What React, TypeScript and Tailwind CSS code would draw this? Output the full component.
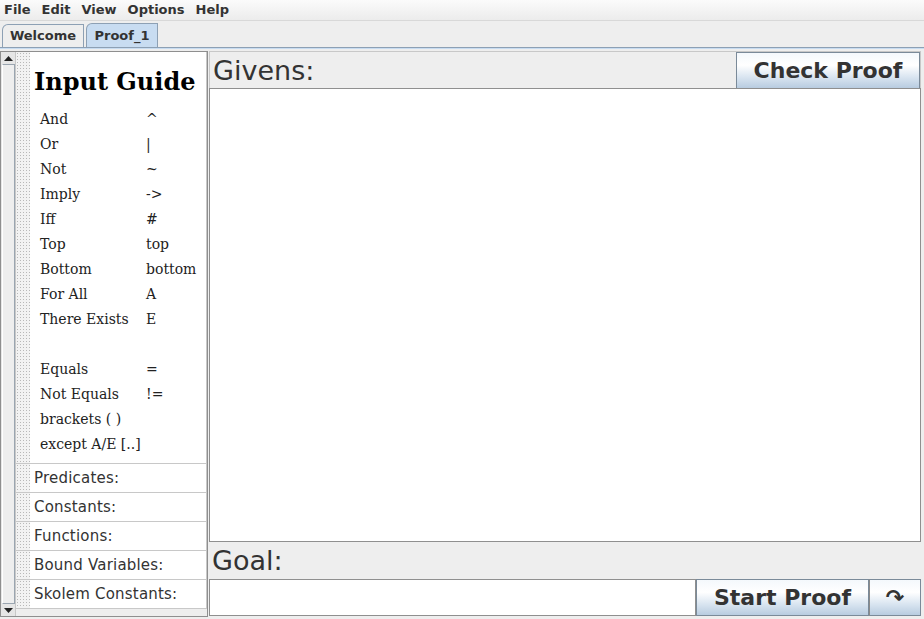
import React from "react";

const dots =
  "bg-[radial-gradient(circle,#b8b8b8_0.8px,transparent_1px)] bg-[length:3px_3px]";

const guide: [string, string][] = [
  ["And", "^"],
  ["Or", "|"],
  ["Not", "~"],
  ["Imply", "->"],
  ["Iff", "#"],
  ["Top", "top"],
  ["Bottom", "bottom"],
  ["For All", "A"],
  ["There Exists", "E"],
  ["", ""],
  ["Equals", "="],
  ["Not Equals", "!="],
  ["brackets ( )", ""],
  ["except A/E [..]", ""],
];

const sections = ["Predicates:", "Constants:", "Functions:", "Bound Variables:", "Skolem Constants:"];

const btn =
  "flex items-center justify-center border border-[#7a8a99] bg-[linear-gradient(to_bottom,#f4f8fc_0%,#ffffff_35%,#d8e4f0_70%,#b8cce0_100%)] text-[#333] font-bold text-[22px]";

export default function App() {
  return (
    <div
      className="w-[924px] h-[619px] bg-[#eeeeee] flex flex-col overflow-hidden text-[#333]"
      style={{ fontFamily: '"DejaVu Sans", sans-serif' }}
    >
      {/* menu bar */}
      <div className="h-[21px] flex items-center gap-[11px] pl-[4px] text-[13px] font-bold bg-[linear-gradient(to_bottom,#fbfbfb,#ececec)] border-b border-[#d8d8d8]">
        <span>File</span>
        <span>Edit</span>
        <span>View</span>
        <span>Options</span>
        <span>Help</span>
      </div>
      {/* tabs */}
      <div className="h-[27px] flex items-end pl-[2px] gap-[2px] border-b border-[#8da0b4]">
        <div className="h-[23px] w-[82px] flex items-center justify-center text-[13px] font-bold border border-b-0 border-[#8da0b4] rounded-tl-[6px] bg-[#eeeeee]">
          Welcome
        </div>
        <div className="h-[24px] w-[72px] flex items-center justify-center text-[13px] font-bold border border-b-0 border-[#8da0b4] rounded-tl-[6px] bg-[#c8dcf1]">
          Proof_1
        </div>
      </div>
      {/* main */}
      <div className="flex-1 flex border-t border-[#c8dcf1] pt-[2px] pr-[3px]">
        {/* left panel */}
        <div className="w-[208px] flex border border-[#8f8f8f] mb-[2px]">
          {/* scrollbar */}
          <div className="w-[15px] flex flex-col items-center bg-[#e6e6e6] border-r border-[#c8c8c8]">
            <div className="h-[12px] flex items-center justify-center">
              <svg width="9" height="5" viewBox="0 0 9 5">
                <path d="M0 5 L4.5 0 L9 5 Z" fill="#222" />
              </svg>
            </div>
            <div className="flex-1 w-[13px] border border-[#9aa5b0] bg-[#eeeeee] border-l-white" />
            <div className="h-[12px] flex items-center justify-center">
              <svg width="9" height="5" viewBox="0 0 9 5">
                <path d="M0 0 L4.5 5 L9 0 Z" fill="#222" />
              </svg>
            </div>
          </div>
          <div className="flex-1 flex flex-col">
            {/* input guide */}
            <div className="h-[412px] flex border-b border-[#c8c8c8]">
              <div className={`w-[14px] ${dots} bg-[#f2f2f2]`} />
              <div
                className="flex-1 bg-white border-r border-[#c8c8c8] pl-[4px] pt-[15px]"
                style={{ fontFamily: '"DejaVu Serif", serif' }}
              >
                <div className="text-[24px] font-bold text-black leading-[30px]">Input Guide</div>
                <div className="mt-[10px] pl-[6px] text-[14px] text-[#222]">
                  {guide.map(([a, b], i) => (
                    <div key={i} className="h-[25px] flex items-center">
                      <span className="w-[106px] whitespace-nowrap">{a}</span>
                      <span>{b}</span>
                    </div>
                  ))}
                </div>
              </div>
            </div>
            {sections.map((s) => (
              <div key={s} className="h-[29px] flex border-b border-[#c8c8c8]">
                <div className={`w-[14px] ${dots} bg-[#f2f2f2]`} />
                <div className="flex-1 bg-white border-r border-[#c8c8c8] pl-[4px] flex items-center text-[15px] tracking-[0.2px] text-[#333]">
                  {s}
                </div>
              </div>
            ))}
          </div>
        </div>
        {/* right panel */}
        <div className="flex-1 flex flex-col ml-[1px]">
          <div className="h-[37px] flex items-center border border-[#c8c8c8] border-b-0">
            <span className="flex-1 pl-[3px] text-[27px] leading-none">Givens:</span>
            <div className={`${btn} w-[184px] h-[37px]`}>Check Proof</div>
          </div>
          <div className="flex-1 bg-white border border-[#8f8f8f]" />
          <div className="h-[37px] flex items-center pl-[3px] text-[27px] leading-none">Goal:</div>
          <div className="h-[37px] flex mb-[3px]">
            <div className="flex-1 bg-white border border-[#8f8f8f]" />
            <div className={`${btn} w-[173px]`}>Start Proof</div>
            <div className={`${btn} w-[52px] border-l-[#8a8a8a] text-[20px]`}>↷</div>
          </div>
        </div>
      </div>
    </div>
  );
}
